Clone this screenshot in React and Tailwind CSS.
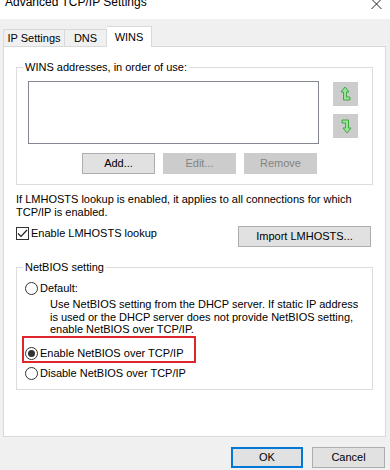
import React from 'react';

const Radio = ({ checked }) => (
  <span className="relative w-[13px] h-[13px] rounded-full border border-[#333] bg-white flex items-center justify-center shrink-0">
    {checked && <span className="w-[7px] h-[7px] rounded-full bg-[#333]" />}
  </span>
);

const GroupBox = ({ label, className, children }) => (
  <div className={`relative border border-[#dcdcdc] ${className}`}>
    <span className="absolute -top-[8px] left-[6px] bg-white px-[2px] leading-[14px]">{label}</span>
    {children}
  </div>
);

const ArrowBtn = ({ down }) => (
  <div className="w-[25px] h-[24px] bg-[#cccccc] flex items-center justify-center">
    <svg width="12" height="16" viewBox="0 0 12 16">
      {down ? (
        <polygon points="7,15 3,10 5.5,10 5.5,5 2,5 2,2 8.5,2 8.5,10 11,10" fill="#9be39b" stroke="#3fa83f" strokeWidth="1" strokeLinejoin="round" />
      ) : (
        <polygon points="5,1 9,6 6.5,6 6.5,11 10,11 10,14 3.5,14 3.5,6 1,6" fill="#9be39b" stroke="#3fa83f" strokeWidth="1" strokeLinejoin="round" />
      )}
    </svg>
  </div>
);

const Btn = ({ children, disabled, className = '' }) => (
  <div
    className={`flex items-center justify-center border ${
      disabled ? 'bg-[#cccccc] border-[#cccccc] text-[#838383]' : 'bg-[#e1e1e1] border-[#adadad] text-black'
    } ${className}`}
  >
    {children}
  </div>
);

export default function App() {
  return (
    <div className="w-[390px] h-[470px] bg-[#f0f0f0] overflow-hidden flex flex-col text-[11px] text-black font-['Liberation_Sans',Arial,sans-serif]">
      {/* title bar */}
      <div className="h-[19px] bg-white flex justify-between items-start shrink-0">
        <span className="pl-[5px] -mt-[5px] leading-[14px] text-[12px] whitespace-nowrap">Advanced TCP/IP Settings</span>
        <svg className="mr-[8px]" width="11" height="9" viewBox="0 0 11 9">
          <path d="M0.5 -1 L10.5 9 M10.5 -1 L0.5 9" stroke="#222" strokeWidth="1" />
        </svg>
      </div>

      {/* tabs */}
      <div className="h-[27px] flex items-end pl-[3px] shrink-0">
        <div className="h-[17px] w-[62px] border border-b-0 border-[#d9d9d9] flex items-center justify-center">IP Settings</div>
        <div className="h-[17px] w-[42px] border border-l-0 border-b-0 border-[#d9d9d9] flex items-center justify-center">DNS</div>
        <div className="h-[21px] w-[45px] -mb-[1px] relative z-10 bg-white border border-l-0 border-b-0 border-[#d9d9d9] flex items-center justify-center">WINS</div>
      </div>

      {/* panel */}
      <div className="ml-[3px] w-[383px] h-[391px] bg-white border border-[#d9d9d9] shrink-0 flex flex-col pl-[12px]">
        <GroupBox label="WINS addresses, in order of use:" className="mt-[20px] w-[357px] h-[118px] flex flex-col pl-[11px] pt-[13px]">
          <div className="flex gap-[14px]">
            <div className="w-[291px] h-[63px] border border-[#828790] bg-white" />
            <div className="flex flex-col gap-[8px] pt-[1px]">
              <ArrowBtn />
              <ArrowBtn down />
            </div>
          </div>
          <div className="flex gap-[8px] mt-[9px] ml-[54px]">
            <Btn className="w-[73px] h-[21px]">Add...</Btn>
            <Btn disabled className="w-[73px] h-[21px]">Edit...</Btn>
            <Btn disabled className="w-[73px] h-[21px]">Remove</Btn>
          </div>
        </GroupBox>

        <p className="mt-[8px] leading-[13px] whitespace-nowrap">
          If LMHOSTS lookup is enabled, it applies to all connections for which
          <br />
          TCP/IP is enabled.
        </p>

        <div className="mt-[7px] flex items-start justify-between w-[355px]">
          <div className="flex items-center gap-[2px]">
            <span className="w-[13px] h-[13px] border border-[#333] bg-white flex items-center justify-center">
              <svg width="11" height="9" viewBox="0 0 11 9">
                <path d="M1 4.5 L4 7.5 L10 1" fill="none" stroke="#222" strokeWidth="1.2" />
              </svg>
            </span>
            <span className="leading-[14px]">Enable LMHOSTS lookup</span>
          </div>
          <Btn className="w-[133px] h-[21px]">Import LMHOSTS...</Btn>
        </div>

        <GroupBox label="NetBIOS setting" className="mt-[20px] w-[357px] h-[123px] pl-[8px] pt-[13px]">
          <div className="flex items-center gap-[2px] h-[14px]">
            <Radio />
            <span>Default:</span>
          </div>
          <p className="ml-[25px] mt-[3px] leading-[12.5px] whitespace-nowrap">
            Use NetBIOS setting from the DHCP server. If static IP address
            <br />
            is used or the DHCP server does not provide NetBIOS setting,
            <br />
            enable NetBIOS over TCP/IP.
          </p>
          <div className="flex items-center gap-[2px] h-[14px] mt-[11px]">
            <Radio checked />
            <span>Enable NetBIOS over TCP/IP</span>
          </div>
          <div className="flex items-center gap-[2px] h-[14px] mt-[6px]">
            <Radio />
            <span>Disable NetBIOS over TCP/IP</span>
          </div>
          {/* annotation highlight */}
          <div className="absolute left-[5px] top-[68px] w-[174px] h-[27px] border-[2.5px] border-[#e0262b]" />
        </GroupBox>
      </div>

      {/* bottom buttons */}
      <div className="flex justify-end gap-[9px] pr-[5px] pt-[10px]">
        <Btn className="w-[72px] h-[21px] !border-2 !border-[#0078d7]">OK</Btn>
        <Btn className="w-[73px] h-[21px]">Cancel</Btn>
      </div>
    </div>
  );
}
